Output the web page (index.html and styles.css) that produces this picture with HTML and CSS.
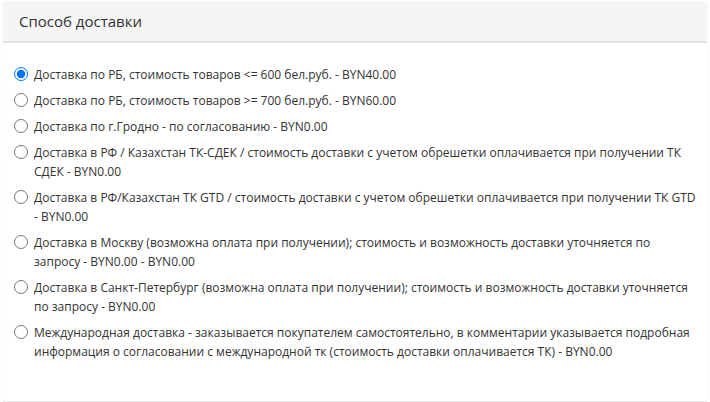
FILE: index.html
```html
<!DOCTYPE html>
<html lang="ru">
<head>
    <meta charset="UTF-8">
    <meta name="viewport" content="width=device-width, initial-scale=1.0">
    <title>Способ доставки</title>
    <link rel="stylesheet" href="styles.css">
</head>
<body>
    <div class="panel">
        <div class="panel-heading">Способ доставки</div>
        <div class="panel-body">
            <label class="option">
                <input type="radio" name="shipping" checked>
                <span>Доставка по РБ, стоимость товаров &lt;= 600 бел.руб. - BYN40.00</span>
            </label>
            <label class="option">
                <input type="radio" name="shipping">
                <span>Доставка по РБ, стоимость товаров &gt;= 700 бел.руб. - BYN60.00</span>
            </label>
            <label class="option">
                <input type="radio" name="shipping">
                <span>Доставка по г.Гродно - по согласованию - BYN0.00</span>
            </label>
            <label class="option">
                <input type="radio" name="shipping">
                <span>Доставка в РФ / Казахстан ТК-СДЕК / стоимость доставки с учетом обрешетки оплачивается при получении ТК СДЕК - BYN0.00</span>
            </label>
            <label class="option">
                <input type="radio" name="shipping">
                <span>Доставка в РФ/Казахстан ТК GTD / стоимость доставки с учетом обрешетки оплачивается при получении ТК GTD - BYN0.00</span>
            </label>
            <label class="option">
                <input type="radio" name="shipping">
                <span>Доставка в Москву (возможна оплата при получении); стоимость и возможность доставки уточняется по запросу - BYN0.00 - BYN0.00</span>
            </label>
            <label class="option">
                <input type="radio" name="shipping">
                <span>Доставка в Санкт-Петербург (возможна оплата при получении); стоимость и возможность доставки уточняется по запросу - BYN0.00</span>
            </label>
            <label class="option">
                <input type="radio" name="shipping">
                <span>Международная доставка - заказывается покупателем самостоятельно, в комментарии указывается подробная информация о согласовании с международной тк (стоимость доставки оплачивается ТК) - BYN0.00</span>
            </label>
        </div>
    </div>
</body>
</html>
```

FILE: styles.css
```css
body {
    margin: 0;
    padding: 2px 3px 0 3px;
    font-family: "Open Sans", "Liberation Sans", sans-serif;
    color: #333;
    background: #fff;
}

.panel {
    background: #fff;
    border-bottom: 1px solid #e8e8e8;
    box-shadow: 0 0 2px rgba(0, 0, 0, 0.08);
}

.panel-heading {
    background: #f5f5f5;
    border-bottom: 2px solid #e2e2e2;
    padding: 0 16px;
    height: 39px;
    line-height: 39px;
    font-size: 15px;
}

.panel-body {
    padding: 22px 8px 40px 11px;
    display: flex;
    flex-direction: column;
    gap: 7px;
}

.option {
    display: flex;
    align-items: flex-start;
    font-size: 12px;
    line-height: 19px;
    cursor: pointer;
}

.option input {
    flex: none;
    width: 14px;
    height: 14px;
    margin: 2px 6px 0 0;
}
```
